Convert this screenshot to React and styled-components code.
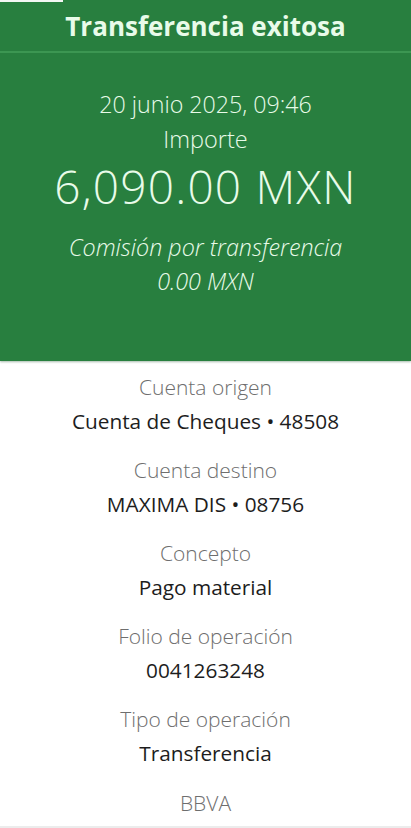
import React from 'react';
import styled, { createGlobalStyle } from 'styled-components';

const GlobalStyle = createGlobalStyle`
  html, body {
    margin: 0;
    padding: 0;
    background: #ffffff;
  }
  body {
    font-family: "Open Sans", "Noto Sans", sans-serif;
    -webkit-font-smoothing: antialiased;
  }
`;

const Screen = styled.div`
  width: 411px;
  height: 828px;
  overflow: hidden;
  position: relative;
  background: #ffffff;
  display: flex;
  flex-direction: column;
`;

const StatusMark = styled.div`
  position: absolute;
  top: 0;
  left: 0;
  width: 63px;
  height: 2px;
  background: #f4f7f4;
`;

const Hero = styled.section`
  background: #287f3f;
  color: #e8fbe9;
  height: 361px;
  display: flex;
  flex-direction: column;
  align-items: center;
  box-shadow: 0 1px 2px rgba(0, 60, 20, 0.35);
`;

const TitleBar = styled.header`
  width: 100%;
  height: 51px;
  display: flex;
  align-items: center;
  justify-content: center;
  border-bottom: 2px solid #3c9652;
`;

const Title = styled.h1`
  margin: 0;
  font-size: 26px;
  font-weight: 700;
  letter-spacing: 0;
`;

const Line = styled.p`
  margin: 0;
  font-size: ${({ size }) => size || 23.5}px;
  font-weight: ${({ weight }) => weight || 300};
  font-style: ${({ italic }) => (italic ? 'italic' : 'normal')};
  line-height: ${({ lh }) => lh || 34}px;
  letter-spacing: ${({ ls }) => ls || 0}px;
  margin-top: ${({ top }) => top || 0}px;
  text-align: center;
`;

const Details = styled.div`
  flex: 1;
  display: flex;
  flex-direction: column;
  align-items: center;
  padding-top: 10px;
  border-bottom: 2px solid #ececec;
`;

const Field = styled.div`
  display: flex;
  flex-direction: column;
  align-items: center;
  margin-bottom: 16px;
`;

const Label = styled.span`
  font-size: 21px;
  font-weight: 300;
  color: #6e6e6e;
  line-height: 33px;
`;

const Value = styled.span`
  font-size: 20.8px;
  font-weight: 400;
  color: #1d1d1d;
  line-height: 34px;
`;

const Footer = styled(Label)`
  line-height: 34px;
`;

const fields = [
  { label: 'Cuenta origen', value: 'Cuenta de Cheques • 48508' },
  { label: 'Cuenta destino', value: 'MAXIMA DIS • 08756' },
  { label: 'Concepto', value: 'Pago material' },
  { label: 'Folio de operación', value: '0041263248' },
  { label: 'Tipo de operación', value: 'Transferencia' },
];

const App = () => (
  <>
    <GlobalStyle />
    <Screen>
      <StatusMark />
      <Hero>
        <TitleBar>
          <Title>Transferencia exitosa</Title>
        </TitleBar>
        <Line top={34} size={23.2}>20 junio 2025, 09:46</Line>
        <Line top={1}>Importe</Line>
        <Line size={46} lh={62} top={-1} ls={1.2}>6,090.00 MXN</Line>
        <Line italic top={13} size={23.3}>Comisión por transferencia</Line>
        <Line italic size={23.3}>0.00 MXN</Line>
      </Hero>
      <Details>
        {fields.map(f => (
          <Field key={f.label}>
            <Label>{f.label}</Label>
            <Value>{f.value}</Value>
          </Field>
        ))}
        <Footer>BBVA</Footer>
      </Details>
    </Screen>
  </>
);

export default App;
